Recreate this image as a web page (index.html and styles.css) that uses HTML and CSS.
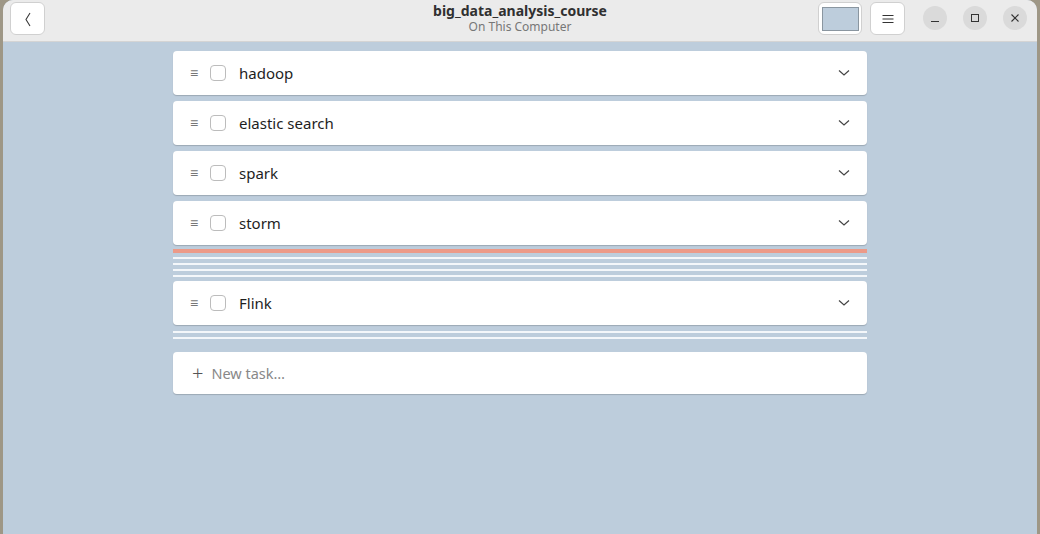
FILE: index.html
```html
<!DOCTYPE html>
<html>
<head>
<meta charset="utf-8">
<link rel="stylesheet" href="styles.css">
</head>
<body>
<div class="desk">
  <div class="window">
    <header class="titlebar">
      <button class="btn back"><svg width="10" height="16" viewBox="0 0 10 16"><path d="M7 2 L3 8.5 L7 15" fill="none" stroke="#3a3a3a" stroke-width="1.1"/></svg></button>
      <div class="titles">
        <div class="title">big_data_analysis_course</div>
        <div class="subtitle">On This Computer</div>
      </div>
      <div class="right">
        <button class="btn colorbtn"><span class="swatch"></span></button>
        <button class="btn menubtn"><svg width="12" height="10" viewBox="0 0 12 10"><path d="M0.5 1.5H11.5M0.5 5H11.5M0.5 8.5H11.5" stroke="#333" stroke-width="1"/></svg></button>
        <div class="wc">
          <span class="circ"><svg width="10" height="10" viewBox="0 0 10 10"><path d="M1 8.5H9" stroke="#333" stroke-width="1"/></svg></span>
          <span class="circ"><svg width="10" height="10" viewBox="0 0 10 10"><rect x="1.5" y="1.5" width="7" height="7" fill="none" stroke="#333" stroke-width="1"/></svg></span>
          <span class="circ"><svg width="10" height="10" viewBox="0 0 10 10"><path d="M1.5 1.5L8.5 8.5M8.5 1.5L1.5 8.5" stroke="#333" stroke-width="1.1"/></svg></span>
        </div>
      </div>
    </header>
    <main class="content">
      <div class="list">
        <div class="task"><span class="handle">≡</span><span class="check"></span><span class="name">hadoop</span><svg class="chev" width="12" height="8" viewBox="0 0 12 8"><path d="M1 1.5L6 6L11 1.5" fill="none" stroke="#444" stroke-width="1.2"/></svg></div>
        <div class="task"><span class="handle">≡</span><span class="check"></span><span class="name">elastic search</span><svg class="chev" width="12" height="8" viewBox="0 0 12 8"><path d="M1 1.5L6 6L11 1.5" fill="none" stroke="#444" stroke-width="1.2"/></svg></div>
        <div class="task"><span class="handle">≡</span><span class="check"></span><span class="name">spark</span><svg class="chev" width="12" height="8" viewBox="0 0 12 8"><path d="M1 1.5L6 6L11 1.5" fill="none" stroke="#444" stroke-width="1.2"/></svg></div>
        <div class="task"><span class="handle">≡</span><span class="check"></span><span class="name">storm</span><svg class="chev" width="12" height="8" viewBox="0 0 12 8"><path d="M1 1.5L6 6L11 1.5" fill="none" stroke="#444" stroke-width="1.2"/></svg></div>
        <div class="seps first">
          <div class="line red"></div>
          <div class="line"></div>
          <div class="line"></div>
          <div class="line"></div>
          <div class="line"></div>
        </div>
        <div class="task"><span class="handle">≡</span><span class="check"></span><span class="name">Flink</span><svg class="chev" width="12" height="8" viewBox="0 0 12 8"><path d="M1 1.5L6 6L11 1.5" fill="none" stroke="#444" stroke-width="1.2"/></svg></div>
        <div class="seps second">
          <div class="line"></div>
          <div class="line"></div>
        </div>
        <div class="task newtask"><span class="plus">+</span><span class="placeholder">New task…</span></div>
      </div>
    </main>
  </div>
</div>
</body>
</html>
```

FILE: styles.css
```css
* { box-sizing: border-box; }
html, body { margin: 0; padding: 0; }
body {
  width: 1040px;
  height: 534px;
  overflow: hidden;
  background: #9e9786;
  font-family: "Noto Sans", "Open Sans", sans-serif;
}
.desk {
  display: flex;
  height: 534px;
  padding: 0 3px 0 3px;
}
.window {
  flex: 1;
  display: flex;
  flex-direction: column;
  background: #bdcddc;
  border-radius: 10px 10px 0 0;
  overflow: hidden;
}
.titlebar {
  height: 42px;
  flex: none;
  background: #ebebeb;
  border-bottom: 1px solid #d4d4d4;
  display: flex;
  align-items: flex-start;
  position: relative;
  padding: 2px 0 0 7px;
}
.btn {
  height: 33px;
  background: #fff;
  border: 1px solid #d0d0d0;
  border-radius: 6px;
  padding: 0;
  display: flex;
  align-items: center;
  justify-content: center;
}
.back { width: 35px; }
.titles {
  position: absolute;
  left: 0;
  right: 0;
  top: 2px;
  text-align: center;
  pointer-events: none;
}
.title {
  font-weight: bold;
  font-size: 14px;
  color: #303030;
  line-height: 18px;
}
.subtitle {
  font-size: 12px;
  color: #777;
  line-height: 14px;
}
.right {
  margin-left: auto;
  display: flex;
  align-items: flex-start;
  padding-right: 10px;
}
.colorbtn { width: 44px; margin-right: 8px; }
.swatch {
  width: 37px;
  height: 24px;
  background: #bdcddc;
  border: 1px solid #8a96a0;
}
.menubtn { width: 35px; margin-right: 18px; }
.wc { display: flex; gap: 16px; padding-top: 4px; }
.circ {
  width: 24px;
  height: 24px;
  border-radius: 50%;
  background: #dadada;
  display: flex;
  align-items: center;
  justify-content: center;
}
.content {
  flex: 1;
  display: flex;
  justify-content: center;
  padding-top: 9px;
}
.list {
  width: 694px;
  display: flex;
  flex-direction: column;
  gap: 6px;
}
.task {
  height: 44px;
  flex: none;
  background: #fff;
  border-radius: 4px;
  box-shadow: 0 1px 1px rgba(0,0,0,0.18);
  display: flex;
  align-items: center;
  padding: 0 17px 0 17px;
}
.handle {
  color: #777;
  font-size: 14px;
  width: 20px;
  line-height: 1;
}
.check {
  width: 16px;
  height: 16px;
  border: 1px solid #bcbcbc;
  border-radius: 4px;
  margin-right: 13px;
}
.name {
  font-size: 15px;
  color: #1e1e1e;
  flex: 1;
}
.seps {
  display: flex;
  flex-direction: column;
  gap: 4px;
}
.seps.first { margin-top: -2px; margin-bottom: -2px; }
.seps.second { margin-bottom: 7px; }
.line {
  height: 2px;
  background: #f4f7fa;
}
.line.red {
  height: 4px;
  background: #ec9a88;
}
.newtask {
  height: 42px;
  padding-left: 19px;
}
.plus {
  font-size: 20px;
  color: #555;
  font-weight: 300;
  margin-right: 8px;
  line-height: 1;
}
.placeholder {
  font-size: 14.5px;
  color: #888;
}
```
